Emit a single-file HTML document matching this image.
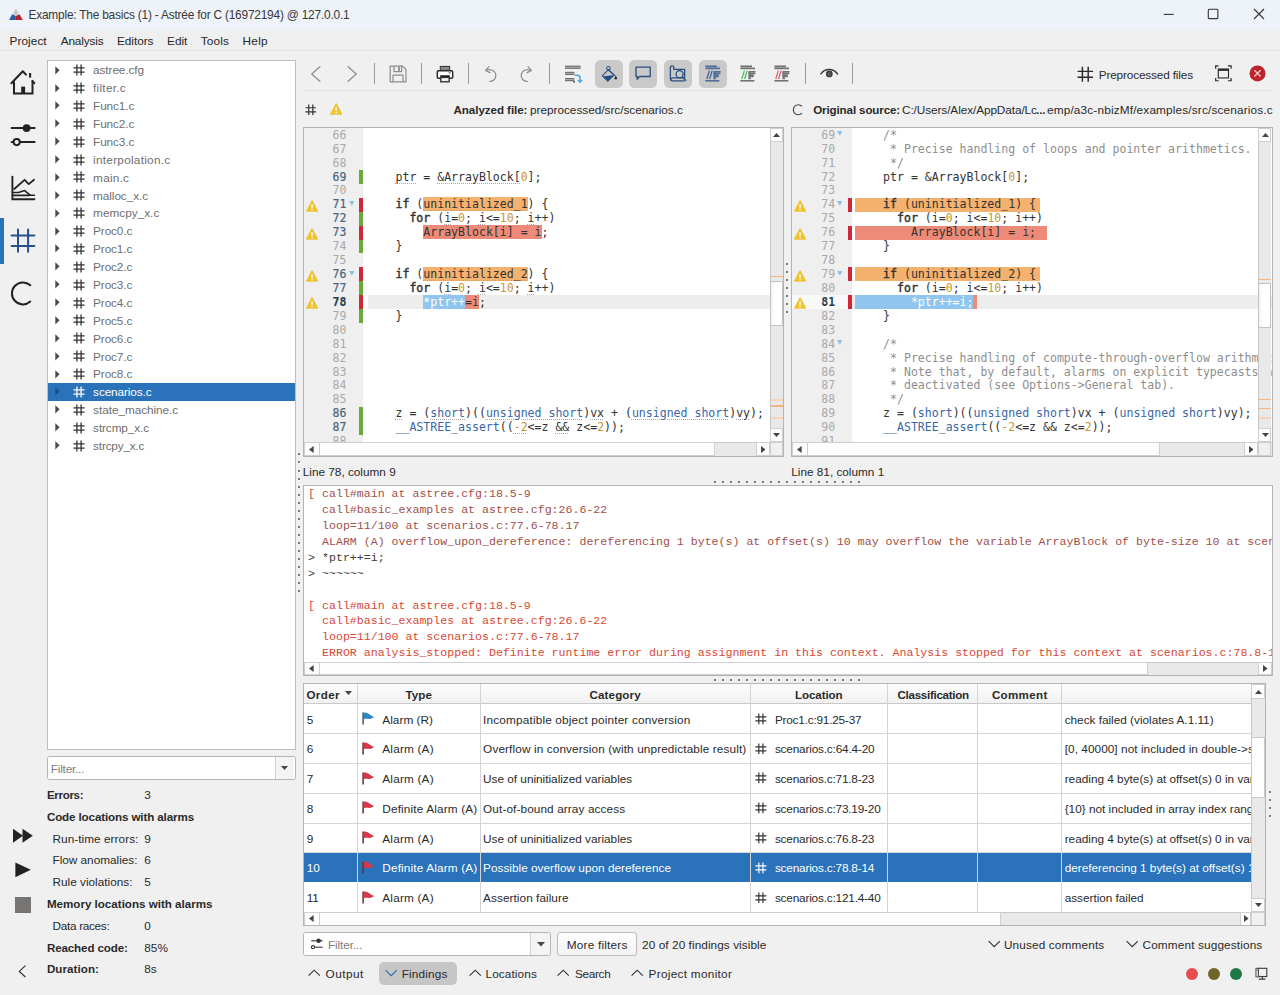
<!DOCTYPE html>
<html lang="en"><head><meta charset="utf-8"><title>Astrée for C</title>
<style>
*{box-sizing:border-box;margin:0;padding:0}
html,body{width:1280px;height:995px;overflow:hidden;background:#f0f0f0}
body{position:relative;font-family:"Liberation Sans",sans-serif;font-size:11.8px;color:#262626}
body div,body span.a,body svg.a{position:absolute}
.u,.b,.t{position:absolute;white-space:pre;line-height:16px;height:16px}
.u{font-size:11.8px}
.b{font-size:11.6px;font-weight:700}
.t{font-size:11.9px}
.pane{background:#fff;border:1px solid #bdbdbd}
.code{font-family:"DejaVu Sans Mono",monospace;font-size:11.555px;white-space:pre;position:absolute;line-height:13.93px;height:13.93px;color:#333}
.out{font-family:"Liberation Mono",monospace;font-size:11.607px;white-space:pre;position:absolute;line-height:15.91px;height:15.91px}

.k{color:#333;-webkit-text-stroke:0.45px #333}
.n{color:#c8962e}
.ty{color:#3a67a8}
.c{color:#8e8e8e}
.hO{background:#f4b26e}
.hR{background:#ee8a78}
.hB{background:#8fc5ee;color:#fff}
.d{text-decoration:underline dotted #a8a8a8 1px;text-underline-offset:2px}
.ln{font-family:"DejaVu Sans Mono",monospace;font-size:11.5px;position:absolute;line-height:13.93px;height:13.93px;text-align:right;color:#a9a9a9;width:30px}
.ln.dk{color:#4a657c;-webkit-text-stroke:0.2px #4a657c}
.ln.cur{color:#2a3a48;font-weight:700}
.sb{background:#e9e9e9}
.sbtn{background:#fdfdfd;border:1px solid #cfcfcf}
.w{color:#fff}
</style></head>
<body>
<div style="left:0px;top:0px;width:1280px;height:29.5px;background:#eef3f9"></div>
<div style="left:0px;top:29.5px;width:1280px;height:21px;background:#efefef"></div>
<div style="left:0px;top:50px;width:1280px;height:1px;background:#e2e2e2"></div>
<svg class="a" style="left:8px;top:7px" width="16" height="15" viewBox="0 0 16 15"><polygon points="7.9,1.2 10.9,6.7 7.8,8.4 4.9,6.7" fill="#c6c8cc"/><polygon points="1.1,12.9 4.2,7.2 7.8,9 7.8,12.9" fill="#2a5a9e"/><polygon points="7.8,12.9 7.8,9 11.5,7.2 14.8,12.9" fill="#b3222f"/></svg>
<span class="t" style="left:28.50px;top:7.20px;color:#383838;letter-spacing:-0.210px;">Example: The basics (1) - Astrée for C (16972194) @ 127.0.0.1</span>
<svg class="a" style="left:1155px;top:4px" width="120" height="20" viewBox="0 0 120 20" fill="none" stroke="#333" stroke-width="1.1"><path d="M8.7 10.4H18.7"/><rect x="53.3" y="5.2" width="9.6" height="9.4" rx="1"/><path d="M99 5L109 15M109 5L99 15"/></svg>
<span class="u" style="left:9.50px;top:32.70px;letter-spacing:0.069px;">Project</span>
<span class="u" style="left:60.70px;top:32.70px;letter-spacing:-0.155px;">Analysis</span>
<span class="u" style="left:117.00px;top:32.70px;letter-spacing:-0.046px;">Editors</span>
<span class="u" style="left:167.00px;top:32.70px;letter-spacing:0.018px;">Edit</span>
<span class="u" style="left:200.70px;top:32.70px;letter-spacing:0.171px;">Tools</span>
<span class="u" style="left:242.50px;top:32.70px;letter-spacing:0.284px;">Help</span>
<div style="left:0px;top:217.8px;width:3.5px;height:46.5px;background:#2a72b9"></div>
<svg class="a" style="left:9px;top:69px" width="28" height="28" viewBox="0 0 28 28" fill="none" stroke="#222" stroke-width="2" stroke-linecap="round" stroke-linejoin="round"><path d="M2.4 14.3L13.8 2.2L17 5.6"/><path d="M21.1 4V8.6" stroke-linecap="butt" stroke-width="2.1"/><path d="M23.4 11.8L25.3 14.2"/><path d="M5 12.4V24.6H23.5V12" stroke-linecap="butt" stroke-linejoin="miter"/><rect x="12.2" y="17.6" width="3.9" height="6.6" fill="#222" stroke="none"/></svg>
<svg class="a" style="left:9px;top:122px" width="28" height="28" viewBox="0 0 28 28" fill="none" stroke="#222" stroke-width="2" stroke-linecap="round" stroke-linejoin="round"><path d="M2.6 6.1H25.6"/><circle cx="17.6" cy="6.1" r="3.9" fill="#222" stroke="none"/><path d="M2.6 20.1H3.8M11.7 20.1H25.6"/><circle cx="7.7" cy="20.1" r="3.1" /></svg>
<svg class="a" style="left:9px;top:175px" width="28" height="28" viewBox="0 0 28 28" fill="none" stroke="#222" stroke-width="2" stroke-linecap="round" stroke-linejoin="round"><path d="M3.4 1.6V24.3H25.4" stroke-width="1.9" stroke-linejoin="miter"/><path d="M5.2 14L15.6 4.8L19.8 9.1L25 4.8" stroke-width="1.8"/><path d="M4.6 17.5H9.5L15.6 15.6L21.2 20.2H25.4M4.6 20.4H20" stroke-width="1.6"/></svg>
<svg class="a" style="left:9px;top:227px" width="28" height="28" viewBox="0 0 28 28" fill="none" stroke="#24508c" stroke-width="2" stroke-linecap="round"><path d="M9 2.6V24.8M19.1 2.6V24.8M2.6 8.5H25.4M2.6 19H25.4"/></svg>
<svg class="a" style="left:9px;top:280px" width="28" height="28" viewBox="0 0 28 28" fill="none" stroke="#222" stroke-width="2" stroke-linecap="round" stroke-linejoin="round"><path d="M21.3 5.2A11 11 0 1 0 21.3 21.6" stroke-width="2"/></svg>
<svg class="a" style="left:10px;top:826px" width="26" height="20" viewBox="0 0 26 20"><polygon points="3,2.8 13,9.8 3,16.8" fill="#222"/><polygon points="12.5,2.8 22.8,9.8 12.5,16.8" fill="#222"/></svg>
<svg class="a" style="left:10px;top:860px" width="26" height="20" viewBox="0 0 26 20"><polygon points="5.4,2.5 20.8,9.8 5.4,17.2" fill="#222"/></svg>
<div style="left:14.9px;top:897px;width:16.4px;height:15.5px;background:#777474"></div>
<svg class="a" style="left:15px;top:962px" width="16" height="18" viewBox="0 0 16 18" fill="none" stroke="#333" stroke-width="1.2"><path d="M10.4 3.6L4.3 9.4L10.4 15"/></svg>
<div class="pane" style="left:47px;top:60px;width:248.5px;height:690px"></div>
<svg class="a" style="left:55px;top:65.64px" width="6" height="9" viewBox="0 0 6 9"><polygon points="0.3,0.3 4.6,4.3 0.3,8.4" fill="#4a4a4a"/></svg>
<svg class="a" style="left:72.5px;top:64.14px" width="12" height="12" viewBox="0 0 12 12" fill="none" stroke="#333" stroke-width="1.3"><path d="M3.9 0.6V11.4M8.1 0.6V11.4M0.4 3.9H11.6M0.4 8.1H11.6"/></svg>
<span class="u" style="left:93.10px;top:62.45px;color:#6e6e6e;letter-spacing:-0.091px;">astree.cfg</span>
<svg class="a" style="left:55px;top:83.52px" width="6" height="9" viewBox="0 0 6 9"><polygon points="0.3,0.3 4.6,4.3 0.3,8.4" fill="#4a4a4a"/></svg>
<svg class="a" style="left:72.5px;top:82.02px" width="12" height="12" viewBox="0 0 12 12" fill="none" stroke="#333" stroke-width="1.3"><path d="M3.9 0.6V11.4M8.1 0.6V11.4M0.4 3.9H11.6M0.4 8.1H11.6"/></svg>
<span class="u" style="left:93.10px;top:80.33px;color:#6e6e6e;letter-spacing:0.248px;">filter.c</span>
<svg class="a" style="left:55px;top:101.40px" width="6" height="9" viewBox="0 0 6 9"><polygon points="0.3,0.3 4.6,4.3 0.3,8.4" fill="#4a4a4a"/></svg>
<svg class="a" style="left:72.5px;top:99.9px" width="12" height="12" viewBox="0 0 12 12" fill="none" stroke="#333" stroke-width="1.3"><path d="M3.9 0.6V11.4M8.1 0.6V11.4M0.4 3.9H11.6M0.4 8.1H11.6"/></svg>
<span class="u" style="left:93.10px;top:98.21px;color:#6e6e6e;letter-spacing:-0.124px;">Func1.c</span>
<svg class="a" style="left:55px;top:119.28px" width="6" height="9" viewBox="0 0 6 9"><polygon points="0.3,0.3 4.6,4.3 0.3,8.4" fill="#4a4a4a"/></svg>
<svg class="a" style="left:72.5px;top:117.78px" width="12" height="12" viewBox="0 0 12 12" fill="none" stroke="#333" stroke-width="1.3"><path d="M3.9 0.6V11.4M8.1 0.6V11.4M0.4 3.9H11.6M0.4 8.1H11.6"/></svg>
<span class="u" style="left:93.10px;top:116.09px;color:#6e6e6e;letter-spacing:-0.124px;">Func2.c</span>
<svg class="a" style="left:55px;top:137.16px" width="6" height="9" viewBox="0 0 6 9"><polygon points="0.3,0.3 4.6,4.3 0.3,8.4" fill="#4a4a4a"/></svg>
<svg class="a" style="left:72.5px;top:135.66px" width="12" height="12" viewBox="0 0 12 12" fill="none" stroke="#333" stroke-width="1.3"><path d="M3.9 0.6V11.4M8.1 0.6V11.4M0.4 3.9H11.6M0.4 8.1H11.6"/></svg>
<span class="u" style="left:93.10px;top:133.97px;color:#6e6e6e;letter-spacing:-0.124px;">Func3.c</span>
<svg class="a" style="left:55px;top:155.04px" width="6" height="9" viewBox="0 0 6 9"><polygon points="0.3,0.3 4.6,4.3 0.3,8.4" fill="#4a4a4a"/></svg>
<svg class="a" style="left:72.5px;top:153.54px" width="12" height="12" viewBox="0 0 12 12" fill="none" stroke="#333" stroke-width="1.3"><path d="M3.9 0.6V11.4M8.1 0.6V11.4M0.4 3.9H11.6M0.4 8.1H11.6"/></svg>
<span class="u" style="left:93.10px;top:151.85px;color:#6e6e6e;letter-spacing:0.256px;">interpolation.c</span>
<svg class="a" style="left:55px;top:172.92px" width="6" height="9" viewBox="0 0 6 9"><polygon points="0.3,0.3 4.6,4.3 0.3,8.4" fill="#4a4a4a"/></svg>
<svg class="a" style="left:72.5px;top:171.42px" width="12" height="12" viewBox="0 0 12 12" fill="none" stroke="#333" stroke-width="1.3"><path d="M3.9 0.6V11.4M8.1 0.6V11.4M0.4 3.9H11.6M0.4 8.1H11.6"/></svg>
<span class="u" style="left:93.10px;top:169.73px;color:#6e6e6e;letter-spacing:0.225px;">main.c</span>
<svg class="a" style="left:55px;top:190.80px" width="6" height="9" viewBox="0 0 6 9"><polygon points="0.3,0.3 4.6,4.3 0.3,8.4" fill="#4a4a4a"/></svg>
<svg class="a" style="left:72.5px;top:189.3px" width="12" height="12" viewBox="0 0 12 12" fill="none" stroke="#333" stroke-width="1.3"><path d="M3.9 0.6V11.4M8.1 0.6V11.4M0.4 3.9H11.6M0.4 8.1H11.6"/></svg>
<span class="u" style="left:93.10px;top:187.61px;color:#6e6e6e;letter-spacing:-0.083px;">malloc_x.c</span>
<svg class="a" style="left:55px;top:208.68px" width="6" height="9" viewBox="0 0 6 9"><polygon points="0.3,0.3 4.6,4.3 0.3,8.4" fill="#4a4a4a"/></svg>
<svg class="a" style="left:72.5px;top:207.18px" width="12" height="12" viewBox="0 0 12 12" fill="none" stroke="#333" stroke-width="1.3"><path d="M3.9 0.6V11.4M8.1 0.6V11.4M0.4 3.9H11.6M0.4 8.1H11.6"/></svg>
<span class="u" style="left:93.10px;top:205.49px;color:#6e6e6e;letter-spacing:-0.002px;">memcpy_x.c</span>
<svg class="a" style="left:55px;top:226.56px" width="6" height="9" viewBox="0 0 6 9"><polygon points="0.3,0.3 4.6,4.3 0.3,8.4" fill="#4a4a4a"/></svg>
<svg class="a" style="left:72.5px;top:225.06px" width="12" height="12" viewBox="0 0 12 12" fill="none" stroke="#333" stroke-width="1.3"><path d="M3.9 0.6V11.4M8.1 0.6V11.4M0.4 3.9H11.6M0.4 8.1H11.6"/></svg>
<span class="u" style="left:93.10px;top:223.37px;color:#6e6e6e;letter-spacing:-0.129px;">Proc0.c</span>
<svg class="a" style="left:55px;top:244.44px" width="6" height="9" viewBox="0 0 6 9"><polygon points="0.3,0.3 4.6,4.3 0.3,8.4" fill="#4a4a4a"/></svg>
<svg class="a" style="left:72.5px;top:242.94px" width="12" height="12" viewBox="0 0 12 12" fill="none" stroke="#333" stroke-width="1.3"><path d="M3.9 0.6V11.4M8.1 0.6V11.4M0.4 3.9H11.6M0.4 8.1H11.6"/></svg>
<span class="u" style="left:93.10px;top:241.25px;color:#6e6e6e;letter-spacing:-0.129px;">Proc1.c</span>
<svg class="a" style="left:55px;top:262.32px" width="6" height="9" viewBox="0 0 6 9"><polygon points="0.3,0.3 4.6,4.3 0.3,8.4" fill="#4a4a4a"/></svg>
<svg class="a" style="left:72.5px;top:260.82px" width="12" height="12" viewBox="0 0 12 12" fill="none" stroke="#333" stroke-width="1.3"><path d="M3.9 0.6V11.4M8.1 0.6V11.4M0.4 3.9H11.6M0.4 8.1H11.6"/></svg>
<span class="u" style="left:93.10px;top:259.13px;color:#6e6e6e;letter-spacing:-0.129px;">Proc2.c</span>
<svg class="a" style="left:55px;top:280.20px" width="6" height="9" viewBox="0 0 6 9"><polygon points="0.3,0.3 4.6,4.3 0.3,8.4" fill="#4a4a4a"/></svg>
<svg class="a" style="left:72.5px;top:278.7px" width="12" height="12" viewBox="0 0 12 12" fill="none" stroke="#333" stroke-width="1.3"><path d="M3.9 0.6V11.4M8.1 0.6V11.4M0.4 3.9H11.6M0.4 8.1H11.6"/></svg>
<span class="u" style="left:93.10px;top:277.01px;color:#6e6e6e;letter-spacing:-0.129px;">Proc3.c</span>
<svg class="a" style="left:55px;top:298.08px" width="6" height="9" viewBox="0 0 6 9"><polygon points="0.3,0.3 4.6,4.3 0.3,8.4" fill="#4a4a4a"/></svg>
<svg class="a" style="left:72.5px;top:296.58px" width="12" height="12" viewBox="0 0 12 12" fill="none" stroke="#333" stroke-width="1.3"><path d="M3.9 0.6V11.4M8.1 0.6V11.4M0.4 3.9H11.6M0.4 8.1H11.6"/></svg>
<span class="u" style="left:93.10px;top:294.89px;color:#6e6e6e;letter-spacing:-0.129px;">Proc4.c</span>
<svg class="a" style="left:55px;top:315.96px" width="6" height="9" viewBox="0 0 6 9"><polygon points="0.3,0.3 4.6,4.3 0.3,8.4" fill="#4a4a4a"/></svg>
<svg class="a" style="left:72.5px;top:314.46px" width="12" height="12" viewBox="0 0 12 12" fill="none" stroke="#333" stroke-width="1.3"><path d="M3.9 0.6V11.4M8.1 0.6V11.4M0.4 3.9H11.6M0.4 8.1H11.6"/></svg>
<span class="u" style="left:93.10px;top:312.77px;color:#6e6e6e;letter-spacing:-0.129px;">Proc5.c</span>
<svg class="a" style="left:55px;top:333.84px" width="6" height="9" viewBox="0 0 6 9"><polygon points="0.3,0.3 4.6,4.3 0.3,8.4" fill="#4a4a4a"/></svg>
<svg class="a" style="left:72.5px;top:332.34px" width="12" height="12" viewBox="0 0 12 12" fill="none" stroke="#333" stroke-width="1.3"><path d="M3.9 0.6V11.4M8.1 0.6V11.4M0.4 3.9H11.6M0.4 8.1H11.6"/></svg>
<span class="u" style="left:93.10px;top:330.65px;color:#6e6e6e;letter-spacing:-0.129px;">Proc6.c</span>
<svg class="a" style="left:55px;top:351.72px" width="6" height="9" viewBox="0 0 6 9"><polygon points="0.3,0.3 4.6,4.3 0.3,8.4" fill="#4a4a4a"/></svg>
<svg class="a" style="left:72.5px;top:350.22px" width="12" height="12" viewBox="0 0 12 12" fill="none" stroke="#333" stroke-width="1.3"><path d="M3.9 0.6V11.4M8.1 0.6V11.4M0.4 3.9H11.6M0.4 8.1H11.6"/></svg>
<span class="u" style="left:93.10px;top:348.53px;color:#6e6e6e;letter-spacing:-0.129px;">Proc7.c</span>
<svg class="a" style="left:55px;top:369.60px" width="6" height="9" viewBox="0 0 6 9"><polygon points="0.3,0.3 4.6,4.3 0.3,8.4" fill="#4a4a4a"/></svg>
<svg class="a" style="left:72.5px;top:368.1px" width="12" height="12" viewBox="0 0 12 12" fill="none" stroke="#333" stroke-width="1.3"><path d="M3.9 0.6V11.4M8.1 0.6V11.4M0.4 3.9H11.6M0.4 8.1H11.6"/></svg>
<span class="u" style="left:93.10px;top:366.41px;color:#6e6e6e;letter-spacing:-0.129px;">Proc8.c</span>
<div style="left:48px;top:382.94px;width:246.5px;height:17.98px;background:#2a72b9"></div>
<svg class="a" style="left:55px;top:387.48px" width="6" height="9" viewBox="0 0 6 9"><polygon points="0.3,0.3 4.6,4.3 0.3,8.4" fill="#1c4f85"/></svg>
<svg class="a" style="left:72.5px;top:385.98px" width="12" height="12" viewBox="0 0 12 12" fill="none" stroke="#fff" stroke-width="1.3"><path d="M3.9 0.6V11.4M8.1 0.6V11.4M0.4 3.9H11.6M0.4 8.1H11.6"/></svg>
<span class="u" style="left:93.10px;top:384.29px;color:#fff;letter-spacing:-0.116px;">scenarios.c</span>
<svg class="a" style="left:55px;top:405.36px" width="6" height="9" viewBox="0 0 6 9"><polygon points="0.3,0.3 4.6,4.3 0.3,8.4" fill="#4a4a4a"/></svg>
<svg class="a" style="left:72.5px;top:403.86px" width="12" height="12" viewBox="0 0 12 12" fill="none" stroke="#333" stroke-width="1.3"><path d="M3.9 0.6V11.4M8.1 0.6V11.4M0.4 3.9H11.6M0.4 8.1H11.6"/></svg>
<span class="u" style="left:93.10px;top:402.17px;color:#6e6e6e;letter-spacing:-0.054px;">state_machine.c</span>
<svg class="a" style="left:55px;top:423.24px" width="6" height="9" viewBox="0 0 6 9"><polygon points="0.3,0.3 4.6,4.3 0.3,8.4" fill="#4a4a4a"/></svg>
<svg class="a" style="left:72.5px;top:421.74px" width="12" height="12" viewBox="0 0 12 12" fill="none" stroke="#333" stroke-width="1.3"><path d="M3.9 0.6V11.4M8.1 0.6V11.4M0.4 3.9H11.6M0.4 8.1H11.6"/></svg>
<span class="u" style="left:93.10px;top:420.05px;color:#6e6e6e;letter-spacing:-0.113px;">strcmp_x.c</span>
<svg class="a" style="left:55px;top:441.12px" width="6" height="9" viewBox="0 0 6 9"><polygon points="0.3,0.3 4.6,4.3 0.3,8.4" fill="#4a4a4a"/></svg>
<svg class="a" style="left:72.5px;top:439.62px" width="12" height="12" viewBox="0 0 12 12" fill="none" stroke="#333" stroke-width="1.3"><path d="M3.9 0.6V11.4M8.1 0.6V11.4M0.4 3.9H11.6M0.4 8.1H11.6"/></svg>
<span class="u" style="left:93.10px;top:437.93px;color:#6e6e6e;letter-spacing:-0.191px;">strcpy_x.c</span>
<div style="left:47px;top:756px;width:248.5px;height:23.6px;background:#fff;border:1px solid #b5b5b5;border-radius:2.5px"></div>
<div style="left:275.3px;top:757px;width:1px;height:21.6px;background:#cfcfcf"></div>
<div style="left:276.3px;top:757px;width:18.2px;height:21.6px;background:#f4f4f4;border-radius:0 2px 2px 0"></div>
<svg class="a" style="left:281px;top:765.8px" width="7" height="4.4" viewBox="0 0 8 5"><polygon points="0,0 8,0 4,4.6" fill="#444"/></svg>
<span class="u" style="left:50.80px;top:761.20px;color:#7c7c7c;letter-spacing:-0.223px;">Filter...</span>
<span class="b" style="left:46.90px;top:786.98px;color:#2a2a2a;letter-spacing:-0.325px;">Errors:</span>
<span class="u" style="left:144.30px;top:786.98px;color:#2a2a2a;letter-spacing:-0.006px;">3</span>
<span class="b" style="left:46.90px;top:808.78px;color:#2a2a2a;letter-spacing:-0.116px;">Code locations with alarms</span>
<span class="u" style="left:52.50px;top:830.58px;color:#2a2a2a;letter-spacing:0.043px;">Run-time errors:</span>
<span class="u" style="left:144.30px;top:830.58px;color:#2a2a2a;letter-spacing:-0.006px;">9</span>
<span class="u" style="left:52.50px;top:852.38px;color:#2a2a2a;letter-spacing:-0.022px;">Flow anomalies:</span>
<span class="u" style="left:144.30px;top:852.38px;color:#2a2a2a;letter-spacing:-0.006px;">6</span>
<span class="u" style="left:52.50px;top:874.18px;color:#2a2a2a;letter-spacing:-0.006px;">Rule violations:</span>
<span class="u" style="left:144.30px;top:874.18px;color:#2a2a2a;letter-spacing:-0.006px;">5</span>
<span class="b" style="left:46.90px;top:895.98px;color:#2a2a2a;">Memory locations with alarms</span>
<span class="u" style="left:52.50px;top:917.78px;color:#2a2a2a;letter-spacing:-0.312px;">Data races:</span>
<span class="u" style="left:144.30px;top:917.78px;color:#2a2a2a;letter-spacing:-0.006px;">0</span>
<span class="b" style="left:46.90px;top:939.58px;color:#2a2a2a;letter-spacing:-0.122px;">Reached code:</span>
<span class="u" style="left:144.30px;top:939.58px;color:#2a2a2a;letter-spacing:-0.007px;">85%</span>
<span class="b" style="left:46.90px;top:961.38px;color:#2a2a2a;letter-spacing:0.063px;">Duration:</span>
<span class="u" style="left:144.30px;top:961.38px;color:#2a2a2a;letter-spacing:-0.006px;">8s</span>
<div style="left:303px;top:90px;width:969px;height:1px;background:#e3e3e3"></div>
<div style="left:374.2px;top:63px;width:1.2px;height:20.5px;background:#9a9a9a"></div>
<div style="left:420.9px;top:63px;width:1.2px;height:20.5px;background:#9a9a9a"></div>
<div style="left:467.9px;top:63px;width:1.2px;height:20.5px;background:#9a9a9a"></div>
<div style="left:549.1999999999999px;top:63px;width:1.2px;height:20.5px;background:#9a9a9a"></div>
<div style="left:805.1999999999999px;top:63px;width:1.2px;height:20.5px;background:#9a9a9a"></div>
<div style="left:851.9px;top:63px;width:1.2px;height:20.5px;background:#9a9a9a"></div>
<svg class="a" style="left:304.3px;top:61.5px" width="24" height="24" viewBox="0 0 24 24" fill="none" stroke="#8c8c8c" stroke-width="1.2" stroke-linecap="round" stroke-linejoin="round"><path d="M15.9 4.7L7.7 12L15.9 19.3"/></svg>
<svg class="a" style="left:339.5px;top:61.5px" width="24" height="24" viewBox="0 0 24 24" fill="none" stroke="#8c8c8c" stroke-width="1.2" stroke-linecap="round" stroke-linejoin="round"><path d="M8.1 4.7L16.3 12L8.1 19.3"/></svg>
<svg class="a" style="left:386.0px;top:61.5px" width="24" height="24" viewBox="0 0 24 24" fill="none" stroke="#8c8c8c" stroke-width="1.2" stroke-linecap="round" stroke-linejoin="round"><path d="M4.2 4.2H16.6L20 7.6V19.8H4.2Z"/><path d="M8 4.4V9.6H15.6V4.4"/><path d="M13 5.6V8.2" stroke-width="1.8"/><path d="M7 19.6V13.2H17V19.6"/></svg>
<svg class="a" style="left:433.2px;top:61.5px" width="24" height="24" viewBox="0 0 24 24" ><rect x="7.3" y="4.4" width="9.4" height="4" fill="#888" stroke="#333" stroke-width="1"/><rect x="4.3" y="8.8" width="15.4" height="7.4" rx="1.2" fill="#fff" stroke="#2a2a2a" stroke-width="1.5"/><rect x="7.2" y="13.2" width="9.6" height="2.2" fill="#2a2a2a"/><rect x="7.8" y="15.4" width="8.4" height="4.4" fill="#eee" stroke="#2a2a2a" stroke-width="1.3"/><rect x="15.6" y="10.2" width="2" height="1.4" fill="#777"/></svg>
<svg class="a" style="left:479.0px;top:61.5px" width="24" height="24" viewBox="0 0 24 24" fill="none" stroke="#8c8c8c" stroke-width="1.2" stroke-linecap="round" stroke-linejoin="round"><path d="M7 8.2C13.5 6.2 18 10.5 16.5 15.2C15.6 17.8 13.2 19.4 10.5 19.5"/><path d="M10 4.6L6.6 8.4L11 10.6"/></svg>
<svg class="a" style="left:514.0px;top:61.5px" width="24" height="24" viewBox="0 0 24 24" fill="none" stroke="#8c8c8c" stroke-width="1.2" stroke-linecap="round" stroke-linejoin="round"><path d="M17 8.2C10.5 6.2 6 10.5 7.5 15.2C8.4 17.8 10.8 19.4 13.5 19.5"/><path d="M14 4.6L17.4 8.4L13 10.6"/></svg>
<svg class="a" style="left:561.4px;top:61.5px" width="24" height="24" viewBox="0 0 24 24" ><rect x="4" y="3.6" width="15.6" height="3.3" fill="#6e6e6e"/><rect x="4" y="9.8" width="9.4" height="3.2" fill="#6e6e6e"/><rect x="4" y="16" width="9.4" height="3.2" fill="#6e6e6e"/><rect x="12.1" y="19" width="1.8" height="1.5" fill="#555"/><path d="M4 5.25H19.6M4 11.4H13.4M4 17.6H13.4" stroke="#f0f0f0" stroke-width="0.5"/><path d="M13.6 13.2H16.4C18.6 13.2 19.1 14.6 19.1 16.2V19.6" fill="none" stroke="#4ea2e2" stroke-width="1.5"/><path d="M16.9 18L19.1 20.4L21.2 18" fill="none" stroke="#4ea2e2" stroke-width="1.3"/></svg>
<div style="left:594.5px;top:59.5px;width:28px;height:28px;background:#c9c9c9;border-radius:5.5px"></div>
<div style="left:629.2px;top:59.5px;width:28px;height:28px;background:#c9c9c9;border-radius:5.5px"></div>
<div style="left:664px;top:59.5px;width:28px;height:28px;background:#c9c9c9;border-radius:5.5px"></div>
<div style="left:699px;top:59.5px;width:28px;height:28px;background:#c9c9c9;border-radius:5.5px"></div>
<svg class="a" style="left:596.5px;top:61.5px" width="24" height="24" viewBox="0 0 24 24" ><g transform="translate(1.1 0.6) scale(0.92)"><circle cx="11.2" cy="6.2" r="1.9" fill="none" stroke="#2b4f7c" stroke-width="1.1"/><path d="M11 7.8L4.6 14.4L10.6 20.2L17.2 13.6Z" fill="none" stroke="#2b4f7c" stroke-width="1.2" stroke-linejoin="round"/><path d="M5 14.6L10.6 20L16.6 14.2C13 13.4 9 15.4 5 14.6Z" fill="#1f4d85"/><path d="M11.4 8L17.4 13.4L19 14.2" fill="none" stroke="#2b4f7c" stroke-width="1.1"/><path d="M19.2 14.4C20.2 15.8 20.6 16.4 20.6 17.1A1.4 1.4 0 0 1 17.8 17.1C17.8 16.4 18.2 15.8 19.2 14.4Z" fill="#23364f"/></g></svg>
<svg class="a" style="left:631.2px;top:61.5px" width="24" height="24" viewBox="0 0 24 24" ><path d="M5 5.1H19.2V14.5H8.4L6.2 17.3V14.5H5Z" fill="none" stroke="#2b4f7c" stroke-width="1.3" stroke-linejoin="round"/></svg>
<svg class="a" style="left:666.0px;top:61.5px" width="24" height="24" viewBox="0 0 24 24" ><g transform="translate(0 -0.8)"><path d="M6 4.6C4.8 4.6 4.4 5.4 4.4 6.4V17.4C4.4 18.8 5.2 19.6 6.4 19.6H18.4" fill="none" stroke="#2b4f7c" stroke-width="1.3"/><path d="M6.2 4.6C7.4 4.6 7.8 5.4 7.8 6.4V8.2H18.6V16.6H7.6C6 16.6 5 17.4 4.6 18.2" fill="none" stroke="#2b4f7c" stroke-width="1.3"/><circle cx="13.6" cy="13" r="3.5" fill="#c9c9c9" stroke="#2b4f7c" stroke-width="1.3"/><path d="M16.2 15.8L20 19.6" stroke="#2b4f7c" stroke-width="1.5"/></g></svg>
<svg class="a" style="left:701.0px;top:61.5px" width="24" height="24" viewBox="0 0 24 24" fill="none"><path d="M4.4 4.4H16" stroke="#4f6e98" stroke-width="1.9"/><path d="M4.4 6.4H19" stroke="#4f6e98" stroke-width="1.7"/><path d="M4.4 18.8H18.4" stroke="#4f6e98" stroke-width="1.6"/><path d="M8.4 8.6L5.8 17M11.2 8.6L8.6 17" stroke="#3f6598" stroke-width="1.3"/><path d="M12.6 9.8H19.6M12.6 11.4H19.4M12.6 13.2H17.8M12.6 14.6H17.8M12.6 16.4H15" stroke="#4f6e98" stroke-width="1.5"/><path d="M13.4 9.6V17" stroke="#4f6e98" stroke-width="1.8"/></svg>
<svg class="a" style="left:735.5px;top:61.5px" width="24" height="24" viewBox="0 0 24 24" fill="none"><path d="M4.4 4.4H16" stroke="#737373" stroke-width="1.9"/><path d="M4.4 6.4H19" stroke="#737373" stroke-width="1.7"/><path d="M4.4 18.8H18.4" stroke="#737373" stroke-width="1.6"/><path d="M8.4 8.6L5.8 17M11.2 8.6L8.6 17" stroke="#4fbf5f" stroke-width="1.3"/><path d="M12.6 9.8H19.6M12.6 11.4H19.4M12.6 13.2H17.8M12.6 14.6H17.8M12.6 16.4H15" stroke="#737373" stroke-width="1.5"/><path d="M13.4 9.6V17" stroke="#737373" stroke-width="1.8"/></svg>
<svg class="a" style="left:770.3px;top:61.5px" width="24" height="24" viewBox="0 0 24 24" fill="none"><path d="M4.4 4.4H16" stroke="#737373" stroke-width="1.9"/><path d="M4.4 6.4H19" stroke="#737373" stroke-width="1.7"/><path d="M4.4 18.8H18.4" stroke="#737373" stroke-width="1.6"/><path d="M8.4 8.6L5.8 17M11.2 8.6L8.6 17" stroke="#e0646c" stroke-width="1.3"/><path d="M12.6 9.8H19.6M12.6 11.4H19.4M12.6 13.2H17.8M12.6 14.6H17.8M12.6 16.4H15" stroke="#737373" stroke-width="1.5"/><path d="M13.4 9.6V17" stroke="#737373" stroke-width="1.8"/></svg>
<svg class="a" style="left:817.0px;top:61.5px" width="24" height="24" viewBox="0 0 24 24" ><path d="M3.8 12C7.6 5.9 16.6 5.9 20.6 12" fill="none" stroke="#3a3a3a" stroke-width="1.4" stroke-linecap="round"/><circle cx="12.3" cy="11.9" r="3.4" fill="#3f3f3f"/><circle cx="12.3" cy="11.9" r="1.6" fill="#777"/><path d="M12.3 10.4V12.1H13.8" fill="none" stroke="#333" stroke-width="0.8"/></svg>
<svg class="a" style="left:1077.4px;top:65.60000000000001px" width="16.6" height="16.6" viewBox="0 0 12 12" fill="none" stroke="#2a2a2a" stroke-width="1.05"><path d="M3.9 0.6V11.4M8.1 0.6V11.4M0.4 3.9H11.6M0.4 8.1H11.6"/></svg>
<span class="u" style="left:1098.70px;top:67.20px;color:#2a2a2a;letter-spacing:-0.158px;">Preprocessed files</span>
<svg class="a" style="left:1214px;top:64.2px" width="18.6" height="18.6" viewBox="0 0 20 20" fill="none" stroke="#2a2a2a" stroke-width="1.3"><path d="M1.8 5V2H5M15 2H18.4V5M18.4 15V18H15M5 18H1.8V15"/><rect x="4.6" y="5.4" width="11" height="9.6" stroke-width="1.2"/><path d="M4.6 6.4H15.6" stroke-width="2"/></svg>
<svg class="a" style="left:1249.4px;top:64.9px" width="17" height="17" viewBox="0 0 17 17"><circle cx="8.5" cy="8.4" r="8" fill="#bd242b"/><path d="M5.4 5.3L11.6 11.5M11.6 5.3L5.4 11.5" stroke="#f5c0c0" stroke-width="1.5" fill="none"/></svg>
<svg class="a" style="left:304.6px;top:103.8px" width="11.6" height="11.6" viewBox="0 0 12 12" fill="none" stroke="#333" stroke-width="1.25"><path d="M3.9 0.6V11.4M8.1 0.6V11.4M0.4 3.9H11.6M0.4 8.1H11.6"/></svg>
<svg class="a" style="left:329.5px;top:103.1px" width="12.4" height="12.4" viewBox="0 0 12 12"><path d="M6 0.5L11.6 11H0.4Z" fill="#f3c42a" stroke="#e9b81a" stroke-width="0.7" stroke-linejoin="round"/><path d="M6 4.2V7.8" stroke="#fff8dc" stroke-width="1.5"/><circle cx="6" cy="9.4" r="0.85" fill="#fff8dc"/></svg>
<span class="b" style="left:453.50px;top:101.60px;color:#2a2a2a;letter-spacing:-0.060px;">Analyzed file:</span>
<span class="u" style="left:530.00px;top:101.60px;color:#2a2a2a;letter-spacing:-0.019px;">preprocessed/src/scenarios.c</span>
<svg class="a" style="left:791px;top:103px" width="14" height="14" viewBox="0 0 14 14" fill="none" stroke="#444" stroke-width="1.1"><path d="M11 3.4A5 5 0 1 0 11 10.2"/></svg>
<span class="b" style="left:813.20px;top:101.60px;color:#2a2a2a;letter-spacing:-0.125px;">Original source:</span>
<span class="u" style="left:902.00px;top:101.60px;color:#2a2a2a;letter-spacing:-0.089px;">C:/Users/Alex/AppData/Lc</span>
<span class="b" style="left:1036.00px;top:101.60px;color:#2a2a2a;letter-spacing:-0.091px;">...</span>
<span class="u" style="left:1047.00px;top:101.60px;color:#2a2a2a;letter-spacing:0.160px;">emp/a3c-nbizMf/examples/src/scenarios.c</span>
<div style="left:303px;top:127px;width:481.2px;height:329.5px;background:#fff;border:1px solid #b4b4b4;overflow:hidden">
<div style="left:0;top:0;width:59px;height:314px;background:#efefef"></div>
<span class="ln" style="left:12.399999999999977px;top:0.75px">66</span>
<span class="ln" style="left:12.399999999999977px;top:14.68px">67</span>
<span class="ln" style="left:12.399999999999977px;top:28.61px">68</span>
<div style="left:55px;top:42px;width:4.2px;height:14px;background:#6aaa38"></div>
<span class="ln dk" style="left:12.399999999999977px;top:42.54px">69</span>
<span class="code" style="left:91.5px;top:42.54px"><span class="d">ptr</span> = <span class="d">&amp;ArrayBlock[</span><span class="n">0</span>];</span>
<span class="ln" style="left:12.399999999999977px;top:56.47px">70</span>
<div style="left:55px;top:70px;width:4.2px;height:14px;background:#d0283a"></div>
<span class="ln dk" style="left:12.399999999999977px;top:70.40px">71</span>
<svg class="a" style="left:44.5px;top:72.91499999999999px" width="5.6" height="4.8" viewBox="0 0 5.6 4.8"><polygon points="0,0 5.6,0 2.8,4.8" fill="#8fc0e6"/></svg>
<svg class="a" style="left:1.6999999999999886px;top:71.915px" width="12.2" height="12.2" viewBox="0 0 12 12"><path d="M6 0.5L11.6 11H0.4Z" fill="#f3c42a" stroke="#e9b81a" stroke-width="0.7" stroke-linejoin="round"/><path d="M6 4.2V7.8" stroke="#fff8dc" stroke-width="1.5"/><circle cx="6" cy="9.4" r="0.85" fill="#fff8dc"/></svg>
<span class="code" style="left:91.5px;top:70.40px"><span class="k">if</span> (<span class="hO d">uninitialized_1</span>) {</span>
<div style="left:55px;top:84px;width:4.2px;height:14px;background:#6aaa38"></div>
<span class="ln dk" style="left:12.399999999999977px;top:84.33px">72</span>
<span class="code" style="left:91.5px;top:84.33px">  <span class="k">for</span> (<span class="d">i</span>=<span class="n">0</span>; <span class="d">i</span>&lt;=<span class="n">10</span>; <span class="d">i</span>++)</span>
<div style="left:55px;top:98px;width:4.2px;height:14px;background:#d0283a"></div>
<span class="ln dk" style="left:12.399999999999977px;top:98.26px">73</span>
<svg class="a" style="left:1.6999999999999886px;top:99.77499999999999px" width="12.2" height="12.2" viewBox="0 0 12 12"><path d="M6 0.5L11.6 11H0.4Z" fill="#f3c42a" stroke="#e9b81a" stroke-width="0.7" stroke-linejoin="round"/><path d="M6 4.2V7.8" stroke="#fff8dc" stroke-width="1.5"/><circle cx="6" cy="9.4" r="0.85" fill="#fff8dc"/></svg>
<span class="code" style="left:91.5px;top:98.26px">    <span class="hR d">ArrayBlock[i] = i</span>;</span>
<div style="left:55px;top:112px;width:4.2px;height:13px;background:#6aaa38"></div>
<span class="ln" style="left:12.399999999999977px;top:112.19px">74</span>
<span class="code" style="left:91.5px;top:112.19px">}</span>
<span class="ln" style="left:12.399999999999977px;top:126.12px">75</span>
<div style="left:55px;top:139px;width:4.2px;height:14px;background:#d0283a"></div>
<span class="ln dk" style="left:12.399999999999977px;top:140.05px">76</span>
<svg class="a" style="left:44.5px;top:142.56499999999997px" width="5.6" height="4.8" viewBox="0 0 5.6 4.8"><polygon points="0,0 5.6,0 2.8,4.8" fill="#8fc0e6"/></svg>
<svg class="a" style="left:1.6999999999999886px;top:141.565px" width="12.2" height="12.2" viewBox="0 0 12 12"><path d="M6 0.5L11.6 11H0.4Z" fill="#f3c42a" stroke="#e9b81a" stroke-width="0.7" stroke-linejoin="round"/><path d="M6 4.2V7.8" stroke="#fff8dc" stroke-width="1.5"/><circle cx="6" cy="9.4" r="0.85" fill="#fff8dc"/></svg>
<span class="code" style="left:91.5px;top:140.05px"><span class="k">if</span> (<span class="hO d">uninitialized_2</span>) {</span>
<div style="left:55px;top:153px;width:4.2px;height:14px;background:#6aaa38"></div>
<span class="ln dk" style="left:12.399999999999977px;top:153.98px">77</span>
<span class="code" style="left:91.5px;top:153.98px">  <span class="k">for</span> (<span class="d">i</span>=<span class="n">0</span>; <span class="d">i</span>&lt;=<span class="n">10</span>; <span class="d">i</span>++)</span>
<div style="left:64px;top:166.96px;width:465.0px;height:14.23px;background:#ededed"></div>
<div style="left:55px;top:167px;width:4.2px;height:14px;background:#d0283a"></div>
<span class="ln dk cur" style="left:12.399999999999977px;top:167.91px">78</span>
<svg class="a" style="left:1.6999999999999886px;top:169.425px" width="12.2" height="12.2" viewBox="0 0 12 12"><path d="M6 0.5L11.6 11H0.4Z" fill="#f3c42a" stroke="#e9b81a" stroke-width="0.7" stroke-linejoin="round"/><path d="M6 4.2V7.8" stroke="#fff8dc" stroke-width="1.5"/><circle cx="6" cy="9.4" r="0.85" fill="#fff8dc"/></svg>
<span class="code" style="left:91.5px;top:167.91px">    <span class="hB">*ptr++</span><span class="hR">=i</span>;</span>
<div style="left:55px;top:181px;width:4.2px;height:14px;background:#6aaa38"></div>
<span class="ln" style="left:12.399999999999977px;top:181.84px">79</span>
<span class="code" style="left:91.5px;top:181.84px">}</span>
<span class="ln" style="left:12.399999999999977px;top:195.77px">80</span>
<span class="ln" style="left:12.399999999999977px;top:209.70px">81</span>
<span class="ln" style="left:12.399999999999977px;top:223.63px">82</span>
<span class="ln" style="left:12.399999999999977px;top:237.56px">83</span>
<span class="ln" style="left:12.399999999999977px;top:251.49px">84</span>
<span class="ln" style="left:12.399999999999977px;top:265.42px">85</span>
<div style="left:55px;top:279px;width:4.2px;height:14px;background:#6aaa38"></div>
<span class="ln dk" style="left:12.399999999999977px;top:279.35px">86</span>
<span class="code" style="left:91.5px;top:279.35px"><span class="d">z</span> = (<span class="ty d">short</span>)((<span class="ty d">unsigned short</span>)<span class="d">vx</span> + (<span class="ty d">unsigned short</span>)<span class="d">vy</span>);</span>
<div style="left:55px;top:293px;width:4.2px;height:14px;background:#6aaa38"></div>
<span class="ln dk" style="left:12.399999999999977px;top:293.28px">87</span>
<span class="code" style="left:91.5px;top:293.28px"><span class="ty">__ASTREE_assert</span>((<span class="n d">-2</span>&lt;=z <span class="d">&amp;&amp;</span> z&lt;=<span class="n">2</span>));</span>
<span class="ln" style="left:12.399999999999977px;top:307.21px">88</span>
<div class="sb" style="left:465.59999999999997px;top:0;width:13.6px;height:314px;border-left:1px solid #c6c6c6"></div>
<div class="sbtn" style="left:465.59999999999997px;top:0;width:13.6px;height:14.2px"></div><svg class="a" style="left:469.2px;top:5.2px" width="7" height="4" viewBox="0 0 7 4"><polygon points="0,4 7,4 3.5,0" fill="#444"/></svg>
<div class="sbtn" style="left:465.59999999999997px;top:299.6px;width:13.6px;height:14.4px"></div><svg class="a" style="left:469.2px;top:305.2px" width="7" height="4" viewBox="0 0 7 4"><polygon points="0,0 7,0 3.5,4" fill="#444"/></svg>
<div style="left:466.59999999999997px;top:147.8px;width:12.6px;height:1.6px;background:#f4b47c"></div>
<div style="left:466.59999999999997px;top:277.2px;width:12.6px;height:1.6px;background:#f4b47c"></div>
<div style="left:466.59999999999997px;top:271px;width:12.6px;height:1.6px;background:#f8d4b4"></div>
<div style="left:466.59999999999997px;top:289px;width:12.6px;height:1.6px;background:#f8d4b4"></div>
<div style="left:465.59999999999997px;top:152.60000000000002px;width:13.6px;height:45.69999999999999px;background:linear-gradient(90deg,#f4f4f4,#fff 40%,#fff);border:1px solid #c2c2c2"></div>
<div class="sb" style="left:0;top:314px;width:479.2px;height:14px;border-top:1px solid #c6c6c6"></div>
<div class="sbtn" style="left:0;top:314px;width:15.6px;height:14px"></div><svg class="a" style="left:5px;top:318px" width="4.6" height="7" viewBox="0 0 4.6 7"><polygon points="4.6,0 4.6,7 0,3.5" fill="#444"/></svg>
<div style="left:15.6px;top:314px;width:395.69999999999993px;height:14px;background:#fdfdfd;border:1px solid #cfcfcf;border-left:none"></div>
<div class="sbtn" style="left:451.59999999999997px;top:314px;width:14.2px;height:14px"></div><svg class="a" style="left:456.59999999999997px;top:318px" width="4.6" height="7" viewBox="0 0 4.6 7"><polygon points="0,0 0,7 4.6,3.5" fill="#444"/></svg>
<div style="left:465.59999999999997px;top:314px;width:13.6px;height:14px;background:#f0f0f0;border:1px solid #cfcfcf"></div>
</div>
<div style="left:791px;top:127px;width:481.5px;height:329.5px;background:#fff;border:1px solid #b4b4b4;overflow:hidden">
<div style="left:0;top:0;width:60.200000000000045px;height:314px;background:#efefef"></div>
<span class="ln" style="left:13.199999999999932px;top:0.75px">69</span>
<svg class="a" style="left:44.799999999999955px;top:3.264999999999994px" width="5.6" height="4.8" viewBox="0 0 5.6 4.8"><polygon points="0,0 5.6,0 2.8,4.8" fill="#8fc0e6"/></svg>
<span class="code" style="left:91.10000000000002px;top:0.75px"><span class="c">/*</span></span>
<span class="ln" style="left:13.199999999999932px;top:14.68px">70</span>
<span class="code" style="left:91.10000000000002px;top:14.68px"><span class="c"> * Precise handling of loops and pointer arithmetics.</span></span>
<span class="ln" style="left:13.199999999999932px;top:28.61px">71</span>
<span class="code" style="left:91.10000000000002px;top:28.61px"><span class="c"> */</span></span>
<span class="ln" style="left:13.199999999999932px;top:42.54px">72</span>
<span class="code" style="left:91.10000000000002px;top:42.54px">ptr = &amp;ArrayBlock[<span class="n">0</span>];</span>
<span class="ln" style="left:13.199999999999932px;top:56.47px">73</span>
<div style="left:56px;top:70px;width:4.2px;height:14px;background:#d0283a"></div>
<div style="left:63px;top:70px;width:185.20000000000005px;height:14px;background:#f4b26e"></div>
<span class="ln" style="left:13.199999999999932px;top:70.40px">74</span>
<svg class="a" style="left:44.799999999999955px;top:72.91499999999999px" width="5.6" height="4.8" viewBox="0 0 5.6 4.8"><polygon points="0,0 5.6,0 2.8,4.8" fill="#8fc0e6"/></svg>
<svg class="a" style="left:1.7999999999999545px;top:71.915px" width="12.2" height="12.2" viewBox="0 0 12 12"><path d="M6 0.5L11.6 11H0.4Z" fill="#f3c42a" stroke="#e9b81a" stroke-width="0.7" stroke-linejoin="round"/><path d="M6 4.2V7.8" stroke="#fff8dc" stroke-width="1.5"/><circle cx="6" cy="9.4" r="0.85" fill="#fff8dc"/></svg>
<span class="code" style="left:91.10000000000002px;top:70.40px"><span class="k">if</span> (uninitialized_1) {</span>
<span class="ln" style="left:13.199999999999932px;top:84.33px">75</span>
<span class="code" style="left:91.10000000000002px;top:84.33px">  <span class="k">for</span> (i=<span class="n">0</span>; i&lt;=<span class="n">10</span>; i++)</span>
<div style="left:56px;top:98px;width:4.2px;height:14px;background:#d0283a"></div>
<div style="left:63px;top:98px;width:192px;height:14px;background:#ee8a78"></div>
<span class="ln" style="left:13.199999999999932px;top:98.26px">76</span>
<svg class="a" style="left:1.7999999999999545px;top:99.77499999999999px" width="12.2" height="12.2" viewBox="0 0 12 12"><path d="M6 0.5L11.6 11H0.4Z" fill="#f3c42a" stroke="#e9b81a" stroke-width="0.7" stroke-linejoin="round"/><path d="M6 4.2V7.8" stroke="#fff8dc" stroke-width="1.5"/><circle cx="6" cy="9.4" r="0.85" fill="#fff8dc"/></svg>
<span class="code" style="left:91.10000000000002px;top:98.26px">    ArrayBlock[i] = i;</span>
<span class="ln" style="left:13.199999999999932px;top:112.19px">77</span>
<span class="code" style="left:91.10000000000002px;top:112.19px">}</span>
<span class="ln" style="left:13.199999999999932px;top:126.12px">78</span>
<div style="left:56px;top:139px;width:4.2px;height:14px;background:#d0283a"></div>
<div style="left:63px;top:139px;width:185.20000000000005px;height:14px;background:#f4b26e"></div>
<span class="ln" style="left:13.199999999999932px;top:140.05px">79</span>
<svg class="a" style="left:44.799999999999955px;top:142.56499999999997px" width="5.6" height="4.8" viewBox="0 0 5.6 4.8"><polygon points="0,0 5.6,0 2.8,4.8" fill="#8fc0e6"/></svg>
<svg class="a" style="left:1.7999999999999545px;top:141.565px" width="12.2" height="12.2" viewBox="0 0 12 12"><path d="M6 0.5L11.6 11H0.4Z" fill="#f3c42a" stroke="#e9b81a" stroke-width="0.7" stroke-linejoin="round"/><path d="M6 4.2V7.8" stroke="#fff8dc" stroke-width="1.5"/><circle cx="6" cy="9.4" r="0.85" fill="#fff8dc"/></svg>
<span class="code" style="left:91.10000000000002px;top:140.05px"><span class="k">if</span> (uninitialized_2) {</span>
<span class="ln" style="left:13.199999999999932px;top:153.98px">80</span>
<span class="code" style="left:91.10000000000002px;top:153.98px">  <span class="k">for</span> (i=<span class="n">0</span>; i&lt;=<span class="n">10</span>; i++)</span>
<div style="left:60.200000000000045px;top:166.96px;width:465.3px;height:14.23px;background:#ededed"></div>
<div style="left:0;top:166.96px;width:60.200000000000045px;height:14.23px;background:#f9f9f9"></div>
<div style="left:56px;top:167px;width:4.2px;height:14px;background:#d0283a"></div>
<div style="left:63px;top:167px;width:118.29999999999995px;height:14px;background:#8fc5ee"></div>
<div style="left:181.29999999999995px;top:167px;width:3.7000000000000455px;height:14px;background:#ee8a78"></div>
<span class="ln cur" style="left:13.199999999999932px;top:167.91px">81</span>
<svg class="a" style="left:1.7999999999999545px;top:169.425px" width="12.2" height="12.2" viewBox="0 0 12 12"><path d="M6 0.5L11.6 11H0.4Z" fill="#f3c42a" stroke="#e9b81a" stroke-width="0.7" stroke-linejoin="round"/><path d="M6 4.2V7.8" stroke="#fff8dc" stroke-width="1.5"/><circle cx="6" cy="9.4" r="0.85" fill="#fff8dc"/></svg>
<span class="code" style="left:91.10000000000002px;top:167.91px"><span class="w">    *ptr++=i;</span></span>
<span class="ln" style="left:13.199999999999932px;top:181.84px">82</span>
<span class="code" style="left:91.10000000000002px;top:181.84px">}</span>
<span class="ln" style="left:13.199999999999932px;top:195.77px">83</span>
<span class="ln" style="left:13.199999999999932px;top:209.70px">84</span>
<svg class="a" style="left:44.799999999999955px;top:212.21499999999995px" width="5.6" height="4.8" viewBox="0 0 5.6 4.8"><polygon points="0,0 5.6,0 2.8,4.8" fill="#8fc0e6"/></svg>
<span class="code" style="left:91.10000000000002px;top:209.70px"><span class="c">/*</span></span>
<span class="ln" style="left:13.199999999999932px;top:223.63px">85</span>
<span class="code" style="left:91.10000000000002px;top:223.63px"><span class="c"> * Precise handling of compute-through-overflow arithmetics</span></span>
<span class="ln" style="left:13.199999999999932px;top:237.56px">86</span>
<span class="code" style="left:91.10000000000002px;top:237.56px"><span class="c"> * Note that, by default, alarms on explicit typecasts are</span></span>
<span class="ln" style="left:13.199999999999932px;top:251.49px">87</span>
<span class="code" style="left:91.10000000000002px;top:251.49px"><span class="c"> * deactivated (see Options-&gt;General tab).</span></span>
<span class="ln" style="left:13.199999999999932px;top:265.42px">88</span>
<span class="code" style="left:91.10000000000002px;top:265.42px"><span class="c"> */</span></span>
<span class="ln" style="left:13.199999999999932px;top:279.35px">89</span>
<span class="code" style="left:91.10000000000002px;top:279.35px">z = (<span class="ty">short</span>)((<span class="ty">unsigned short</span>)vx + (<span class="ty">unsigned short</span>)vy);</span>
<span class="ln" style="left:13.199999999999932px;top:293.28px">90</span>
<span class="code" style="left:91.10000000000002px;top:293.28px"><span class="ty">__ASTREE_assert</span>((<span class="n">-2</span>&lt;=z &amp;&amp; z&lt;=<span class="n">2</span>));</span>
<span class="ln" style="left:13.199999999999932px;top:307.21px">91</span>
<div class="sb" style="left:465.9px;top:0;width:13.6px;height:314px;border-left:1px solid #c6c6c6"></div>
<div class="sbtn" style="left:465.9px;top:0;width:13.6px;height:14.2px"></div><svg class="a" style="left:469.5px;top:5.2px" width="7" height="4" viewBox="0 0 7 4"><polygon points="0,4 7,4 3.5,0" fill="#444"/></svg>
<div class="sbtn" style="left:465.9px;top:299.6px;width:13.6px;height:14.4px"></div><svg class="a" style="left:469.5px;top:305.2px" width="7" height="4" viewBox="0 0 7 4"><polygon points="0,0 7,0 3.5,4" fill="#444"/></svg>
<div style="left:466.9px;top:150.8px;width:12.6px;height:1.6px;background:#f4b47c"></div>
<div style="left:466.9px;top:270.6px;width:12.6px;height:1.6px;background:#f4b47c"></div>
<div style="left:466.9px;top:279.6px;width:12.6px;height:1.6px;background:#f4b47c"></div>
<div style="left:466.9px;top:289.4px;width:12.6px;height:1.6px;background:#f8d4b4"></div>
<div style="left:465.9px;top:155px;width:13.6px;height:44.60000000000002px;background:linear-gradient(90deg,#f4f4f4,#fff 40%,#fff);border:1px solid #c2c2c2"></div>
<div class="sb" style="left:0;top:314px;width:479.5px;height:14px;border-top:1px solid #c6c6c6"></div>
<div class="sbtn" style="left:0;top:314px;width:15.6px;height:14px"></div><svg class="a" style="left:5px;top:318px" width="4.6" height="7" viewBox="0 0 4.6 7"><polygon points="4.6,0 4.6,7 0,3.5" fill="#444"/></svg>
<div style="left:15.6px;top:314px;width:352.4px;height:14px;background:#fdfdfd;border:1px solid #cfcfcf;border-left:none"></div>
<div class="sbtn" style="left:451.9px;top:314px;width:14.2px;height:14px"></div><svg class="a" style="left:456.9px;top:318px" width="4.6" height="7" viewBox="0 0 4.6 7"><polygon points="0,0 0,7 4.6,3.5" fill="#444"/></svg>
<div style="left:465.9px;top:314px;width:13.6px;height:14px;background:#f0f0f0;border:1px solid #cfcfcf"></div>
</div>
<div style="left:787px;top:264px;width:2px;height:2px;background:#fafafa"></div><div style="left:786px;top:263px;width:2px;height:2px;background:#7a7a7a"></div>
<div style="left:787px;top:272px;width:2px;height:2px;background:#fafafa"></div><div style="left:786px;top:271px;width:2px;height:2px;background:#7a7a7a"></div>
<div style="left:787px;top:280px;width:2px;height:2px;background:#fafafa"></div><div style="left:786px;top:279px;width:2px;height:2px;background:#7a7a7a"></div>
<div style="left:787px;top:288px;width:2px;height:2px;background:#fafafa"></div><div style="left:786px;top:287px;width:2px;height:2px;background:#7a7a7a"></div>
<div style="left:787px;top:296px;width:2px;height:2px;background:#fafafa"></div><div style="left:786px;top:295px;width:2px;height:2px;background:#7a7a7a"></div>
<div style="left:787px;top:304px;width:2px;height:2px;background:#fafafa"></div><div style="left:786px;top:303px;width:2px;height:2px;background:#7a7a7a"></div>
<div style="left:787px;top:312px;width:2px;height:2px;background:#fafafa"></div><div style="left:786px;top:311px;width:2px;height:2px;background:#7a7a7a"></div>
<div style="left:715px;top:482px;width:2px;height:2px;background:#fafafa"></div><div style="left:714px;top:481px;width:2px;height:2px;background:#7a7a7a"></div>
<div style="left:723px;top:482px;width:2px;height:2px;background:#fafafa"></div><div style="left:722px;top:481px;width:2px;height:2px;background:#7a7a7a"></div>
<div style="left:731px;top:482px;width:2px;height:2px;background:#fafafa"></div><div style="left:730px;top:481px;width:2px;height:2px;background:#7a7a7a"></div>
<div style="left:739px;top:482px;width:2px;height:2px;background:#fafafa"></div><div style="left:738px;top:481px;width:2px;height:2px;background:#7a7a7a"></div>
<div style="left:747px;top:482px;width:2px;height:2px;background:#fafafa"></div><div style="left:746px;top:481px;width:2px;height:2px;background:#7a7a7a"></div>
<div style="left:755px;top:482px;width:2px;height:2px;background:#fafafa"></div><div style="left:754px;top:481px;width:2px;height:2px;background:#7a7a7a"></div>
<div style="left:763px;top:482px;width:2px;height:2px;background:#fafafa"></div><div style="left:762px;top:481px;width:2px;height:2px;background:#7a7a7a"></div>
<div style="left:771px;top:482px;width:2px;height:2px;background:#fafafa"></div><div style="left:770px;top:481px;width:2px;height:2px;background:#7a7a7a"></div>
<div style="left:779px;top:482px;width:2px;height:2px;background:#fafafa"></div><div style="left:778px;top:481px;width:2px;height:2px;background:#7a7a7a"></div>
<div style="left:787px;top:482px;width:2px;height:2px;background:#fafafa"></div><div style="left:786px;top:481px;width:2px;height:2px;background:#7a7a7a"></div>
<div style="left:795px;top:482px;width:2px;height:2px;background:#fafafa"></div><div style="left:794px;top:481px;width:2px;height:2px;background:#7a7a7a"></div>
<div style="left:803px;top:482px;width:2px;height:2px;background:#fafafa"></div><div style="left:802px;top:481px;width:2px;height:2px;background:#7a7a7a"></div>
<div style="left:811px;top:482px;width:2px;height:2px;background:#fafafa"></div><div style="left:810px;top:481px;width:2px;height:2px;background:#7a7a7a"></div>
<div style="left:819px;top:482px;width:2px;height:2px;background:#fafafa"></div><div style="left:818px;top:481px;width:2px;height:2px;background:#7a7a7a"></div>
<div style="left:827px;top:482px;width:2px;height:2px;background:#fafafa"></div><div style="left:826px;top:481px;width:2px;height:2px;background:#7a7a7a"></div>
<div style="left:835px;top:482px;width:2px;height:2px;background:#fafafa"></div><div style="left:834px;top:481px;width:2px;height:2px;background:#7a7a7a"></div>
<div style="left:843px;top:482px;width:2px;height:2px;background:#fafafa"></div><div style="left:842px;top:481px;width:2px;height:2px;background:#7a7a7a"></div>
<div style="left:851px;top:482px;width:2px;height:2px;background:#fafafa"></div><div style="left:850px;top:481px;width:2px;height:2px;background:#7a7a7a"></div>
<div style="left:859px;top:482px;width:2px;height:2px;background:#fafafa"></div><div style="left:858px;top:481px;width:2px;height:2px;background:#7a7a7a"></div>
<span class="u" style="left:302.80px;top:463.80px;color:#2a2a2a;letter-spacing:-0.014px;">Line 78, column 9</span>
<span class="u" style="left:791.30px;top:463.80px;color:#2a2a2a;letter-spacing:-0.014px;">Line 81, column 1</span>
<div style="left:303px;top:485px;width:969.5px;height:191px;background:#fff;border:1px solid #b4b4b4;overflow:hidden">
<span class="out" style="left:4.1px;top:0.17px;color:#a0504a">[ call#main at astree.cfg:18.5-9</span>
<span class="out" style="left:4.1px;top:16.08px;color:#a0504a">  call#basic_examples at astree.cfg:26.6-22</span>
<span class="out" style="left:4.1px;top:31.99px;color:#a0504a">  loop=11/100 at scenarios.c:77.6-78.17</span>
<span class="out" style="left:4.1px;top:47.90px;color:#a0504a">  ALARM (A) overflow_upon_dereference: dereferencing 1 byte(s) at offset(s) 10 may overflow the variable ArrayBlock of byte-size 10 at scenarios.c:78.8-14</span>
<span class="out" style="left:4.1px;top:63.81px;color:#3c3c3c">&gt; *ptr++=i;</span>
<span class="out" style="left:4.1px;top:79.72px;color:#3c3c3c">&gt; ~~~~~~</span>
<span class="out" style="left:4.1px;top:111.54px;color:#d64836">[ call#main at astree.cfg:18.5-9</span>
<span class="out" style="left:4.1px;top:127.45px;color:#d64836">  call#basic_examples at astree.cfg:26.6-22</span>
<span class="out" style="left:4.1px;top:143.36px;color:#d64836">  loop=11/100 at scenarios.c:77.6-78.17</span>
<span class="out" style="left:4.1px;top:159.27px;color:#d64836">  ERROR analysis_stopped: Definite runtime error during assignment in this context. Analysis stopped for this context at scenarios.c:78.8-14</span>
<div class="sb" style="left:0;top:176px;width:968px;height:13.2px;border-top:1px solid #c6c6c6"></div>
<div class="sbtn" style="left:0;top:176px;width:15.6px;height:13.2px"></div><svg class="a" style="left:5px;top:179.4px" width="4.6" height="7" viewBox="0 0 4.6 7"><polygon points="4.6,0 4.6,7 0,3.5" fill="#444"/></svg>
<div style="left:15.6px;top:176px;width:828.4px;height:13.2px;background:#fdfdfd;border:1px solid #cfcfcf;border-left:none"></div>
<div class="sbtn" style="left:954.2px;top:176px;width:13.6px;height:13.2px"></div><svg class="a" style="left:959px;top:179.4px" width="4.6" height="7" viewBox="0 0 4.6 7"><polygon points="0,0 0,7 4.6,3.5" fill="#444"/></svg>
</div>
<div style="left:299px;top:454px;width:2px;height:2px;background:#fafafa"></div><div style="left:298px;top:453px;width:2px;height:2px;background:#7a7a7a"></div>
<div style="left:299px;top:462px;width:2px;height:2px;background:#fafafa"></div><div style="left:298px;top:461px;width:2px;height:2px;background:#7a7a7a"></div>
<div style="left:299px;top:471px;width:2px;height:2px;background:#fafafa"></div><div style="left:298px;top:470px;width:2px;height:2px;background:#7a7a7a"></div>
<div style="left:299px;top:479px;width:2px;height:2px;background:#fafafa"></div><div style="left:298px;top:478px;width:2px;height:2px;background:#7a7a7a"></div>
<div style="left:299px;top:487px;width:2px;height:2px;background:#fafafa"></div><div style="left:298px;top:486px;width:2px;height:2px;background:#7a7a7a"></div>
<div style="left:299px;top:495px;width:2px;height:2px;background:#fafafa"></div><div style="left:298px;top:494px;width:2px;height:2px;background:#7a7a7a"></div>
<div style="left:299px;top:503px;width:2px;height:2px;background:#fafafa"></div><div style="left:298px;top:502px;width:2px;height:2px;background:#7a7a7a"></div>
<div style="left:299px;top:511px;width:2px;height:2px;background:#fafafa"></div><div style="left:298px;top:510px;width:2px;height:2px;background:#7a7a7a"></div>
<div style="left:299px;top:519px;width:2px;height:2px;background:#fafafa"></div><div style="left:298px;top:518px;width:2px;height:2px;background:#7a7a7a"></div>
<div style="left:299px;top:527px;width:2px;height:2px;background:#fafafa"></div><div style="left:298px;top:526px;width:2px;height:2px;background:#7a7a7a"></div>
<div style="left:299px;top:535px;width:2px;height:2px;background:#fafafa"></div><div style="left:298px;top:534px;width:2px;height:2px;background:#7a7a7a"></div>
<div style="left:299px;top:543px;width:2px;height:2px;background:#fafafa"></div><div style="left:298px;top:542px;width:2px;height:2px;background:#7a7a7a"></div>
<div style="left:299px;top:551px;width:2px;height:2px;background:#fafafa"></div><div style="left:298px;top:550px;width:2px;height:2px;background:#7a7a7a"></div>
<div style="left:299px;top:559px;width:2px;height:2px;background:#fafafa"></div><div style="left:298px;top:558px;width:2px;height:2px;background:#7a7a7a"></div>
<div style="left:299px;top:567px;width:2px;height:2px;background:#fafafa"></div><div style="left:298px;top:566px;width:2px;height:2px;background:#7a7a7a"></div>
<div style="left:299px;top:575px;width:2px;height:2px;background:#fafafa"></div><div style="left:298px;top:574px;width:2px;height:2px;background:#7a7a7a"></div>
<div style="left:299px;top:583px;width:2px;height:2px;background:#fafafa"></div><div style="left:298px;top:582px;width:2px;height:2px;background:#7a7a7a"></div>
<div style="left:299px;top:591px;width:2px;height:2px;background:#fafafa"></div><div style="left:298px;top:590px;width:2px;height:2px;background:#7a7a7a"></div>
<div style="left:715px;top:680px;width:2px;height:2px;background:#fafafa"></div><div style="left:714px;top:679px;width:2px;height:2px;background:#7a7a7a"></div>
<div style="left:723px;top:680px;width:2px;height:2px;background:#fafafa"></div><div style="left:722px;top:679px;width:2px;height:2px;background:#7a7a7a"></div>
<div style="left:731px;top:680px;width:2px;height:2px;background:#fafafa"></div><div style="left:730px;top:679px;width:2px;height:2px;background:#7a7a7a"></div>
<div style="left:739px;top:680px;width:2px;height:2px;background:#fafafa"></div><div style="left:738px;top:679px;width:2px;height:2px;background:#7a7a7a"></div>
<div style="left:747px;top:680px;width:2px;height:2px;background:#fafafa"></div><div style="left:746px;top:679px;width:2px;height:2px;background:#7a7a7a"></div>
<div style="left:755px;top:680px;width:2px;height:2px;background:#fafafa"></div><div style="left:754px;top:679px;width:2px;height:2px;background:#7a7a7a"></div>
<div style="left:763px;top:680px;width:2px;height:2px;background:#fafafa"></div><div style="left:762px;top:679px;width:2px;height:2px;background:#7a7a7a"></div>
<div style="left:771px;top:680px;width:2px;height:2px;background:#fafafa"></div><div style="left:770px;top:679px;width:2px;height:2px;background:#7a7a7a"></div>
<div style="left:779px;top:680px;width:2px;height:2px;background:#fafafa"></div><div style="left:778px;top:679px;width:2px;height:2px;background:#7a7a7a"></div>
<div style="left:787px;top:680px;width:2px;height:2px;background:#fafafa"></div><div style="left:786px;top:679px;width:2px;height:2px;background:#7a7a7a"></div>
<div style="left:795px;top:680px;width:2px;height:2px;background:#fafafa"></div><div style="left:794px;top:679px;width:2px;height:2px;background:#7a7a7a"></div>
<div style="left:803px;top:680px;width:2px;height:2px;background:#fafafa"></div><div style="left:802px;top:679px;width:2px;height:2px;background:#7a7a7a"></div>
<div style="left:811px;top:680px;width:2px;height:2px;background:#fafafa"></div><div style="left:810px;top:679px;width:2px;height:2px;background:#7a7a7a"></div>
<div style="left:819px;top:680px;width:2px;height:2px;background:#fafafa"></div><div style="left:818px;top:679px;width:2px;height:2px;background:#7a7a7a"></div>
<div style="left:827px;top:680px;width:2px;height:2px;background:#fafafa"></div><div style="left:826px;top:679px;width:2px;height:2px;background:#7a7a7a"></div>
<div style="left:835px;top:680px;width:2px;height:2px;background:#fafafa"></div><div style="left:834px;top:679px;width:2px;height:2px;background:#7a7a7a"></div>
<div style="left:843px;top:680px;width:2px;height:2px;background:#fafafa"></div><div style="left:842px;top:679px;width:2px;height:2px;background:#7a7a7a"></div>
<div style="left:851px;top:680px;width:2px;height:2px;background:#fafafa"></div><div style="left:850px;top:679px;width:2px;height:2px;background:#7a7a7a"></div>
<div style="left:859px;top:680px;width:2px;height:2px;background:#fafafa"></div><div style="left:858px;top:679px;width:2px;height:2px;background:#7a7a7a"></div>
<div style="left:303px;top:683px;width:962.8px;height:242.5px;background:#fff;border:1px solid #b4b4b4;overflow:hidden">
<div style="left:0;top:0;width:947.4000000000001px;height:20px;background:linear-gradient(#fdfdfd,#f1f1f1);border-bottom:1px solid #c9c9c9"></div>
<div style="left:0;top:49px;width:947.4000000000001px;height:1px;background:#d6d6d6"></div>
<span class="u" style="left:2.70px;top:27.57px;color:#2a2a2a;letter-spacing:-0.006px;">5</span>
<svg class="a" style="left:57.60000000000002px;top:28.070000000000046px" width="13" height="13" viewBox="0 0 13 13"><path d="M1.1 0.6V12.4" stroke="#3c5468" stroke-width="1.5"/><path d="M1.8 0.7C4.4 0.1 6 1.4 7.6 2.6C9.2 3.7 10.6 4.4 12.1 5C10.6 5.8 9.4 7 7.6 7C5.6 7 4 6.4 1.8 7.2Z" fill="#2b87c4"/></svg>
<span class="u" style="left:78.30px;top:27.57px;color:#2a2a2a;letter-spacing:0.026px;">Alarm (R)</span>
<span class="u" style="left:179.10px;top:27.57px;color:#2a2a2a;letter-spacing:0.162px;">Incompatible object pointer conversion</span>
<svg class="a" style="left:451.4px;top:28.870000000000054px" width="11.8" height="11.8" viewBox="0 0 12 12" fill="none" stroke="#333" stroke-width="1.2"><path d="M3.9 0.6V11.4M8.1 0.6V11.4M0.4 3.9H11.6M0.4 8.1H11.6"/></svg>
<span class="u" style="left:470.90px;top:27.57px;color:#2a2a2a;letter-spacing:-0.209px;">Proc1.c:91.25-37</span>
<div style="left:758px;top:20.75px;width:189.4000000000001px;height:27.78px;overflow:hidden">
<span class="u" style="left:2.70px;top:6.82px;color:#2a2a2a;letter-spacing:-0.013px;">check failed (violates A.1.11)</span>
</div>
<div style="left:0;top:79px;width:947.4000000000001px;height:1px;background:#d6d6d6"></div>
<span class="u" style="left:2.70px;top:57.35px;color:#2a2a2a;letter-spacing:-0.006px;">6</span>
<svg class="a" style="left:57.60000000000002px;top:57.85000000000002px" width="13" height="13" viewBox="0 0 13 13"><path d="M1.1 0.6V12.4" stroke="#6a2c34" stroke-width="1.5"/><path d="M1.8 0.7C4.4 0.1 6 1.4 7.6 2.6C9.2 3.7 10.6 4.4 12.1 5C10.6 5.8 9.4 7 7.6 7C5.6 7 4 6.4 1.8 7.2Z" fill="#d4384a"/></svg>
<span class="u" style="left:78.30px;top:57.35px;color:#2a2a2a;letter-spacing:0.188px;">Alarm (A)</span>
<span class="u" style="left:179.10px;top:57.35px;color:#2a2a2a;letter-spacing:0.112px;">Overflow in conversion (with unpredictable result)</span>
<svg class="a" style="left:451.4px;top:58.65000000000003px" width="11.8" height="11.8" viewBox="0 0 12 12" fill="none" stroke="#333" stroke-width="1.2"><path d="M3.9 0.6V11.4M8.1 0.6V11.4M0.4 3.9H11.6M0.4 8.1H11.6"/></svg>
<span class="u" style="left:470.90px;top:57.35px;color:#2a2a2a;letter-spacing:-0.182px;">scenarios.c:64.4-20</span>
<div style="left:758px;top:50.53px;width:189.4000000000001px;height:27.78px;overflow:hidden">
<span class="u" style="left:2.70px;top:6.82px;color:#2a2a2a;letter-spacing:0.054px;">[0, 40000] not included in double-&gt;single</span>
</div>
<div style="left:0;top:109px;width:947.4000000000001px;height:1px;background:#d6d6d6"></div>
<span class="u" style="left:2.70px;top:87.13px;color:#2a2a2a;letter-spacing:-0.006px;">7</span>
<svg class="a" style="left:57.60000000000002px;top:87.63px" width="13" height="13" viewBox="0 0 13 13"><path d="M1.1 0.6V12.4" stroke="#6a2c34" stroke-width="1.5"/><path d="M1.8 0.7C4.4 0.1 6 1.4 7.6 2.6C9.2 3.7 10.6 4.4 12.1 5C10.6 5.8 9.4 7 7.6 7C5.6 7 4 6.4 1.8 7.2Z" fill="#d4384a"/></svg>
<span class="u" style="left:78.30px;top:87.13px;color:#2a2a2a;letter-spacing:0.188px;">Alarm (A)</span>
<span class="u" style="left:179.10px;top:87.13px;color:#2a2a2a;letter-spacing:-0.014px;">Use of uninitialized variables</span>
<svg class="a" style="left:451.4px;top:88.42999999999999px" width="11.8" height="11.8" viewBox="0 0 12 12" fill="none" stroke="#333" stroke-width="1.2"><path d="M3.9 0.6V11.4M8.1 0.6V11.4M0.4 3.9H11.6M0.4 8.1H11.6"/></svg>
<span class="u" style="left:470.90px;top:87.13px;color:#2a2a2a;letter-spacing:-0.192px;">scenarios.c:71.8-23</span>
<div style="left:758px;top:80.31px;width:189.4000000000001px;height:27.78px;overflow:hidden">
<span class="u" style="left:2.70px;top:6.82px;color:#2a2a2a;letter-spacing:-0.005px;">reading 4 byte(s) at offset(s) 0 in variable</span>
</div>
<div style="left:0;top:139px;width:947.4000000000001px;height:1px;background:#d6d6d6"></div>
<span class="u" style="left:2.70px;top:116.91px;color:#2a2a2a;letter-spacing:-0.006px;">8</span>
<svg class="a" style="left:57.60000000000002px;top:117.41000000000008px" width="13" height="13" viewBox="0 0 13 13"><path d="M1.1 0.6V12.4" stroke="#6a2c34" stroke-width="1.5"/><path d="M1.8 0.7C4.4 0.1 6 1.4 7.6 2.6C9.2 3.7 10.6 4.4 12.1 5C10.6 5.8 9.4 7 7.6 7C5.6 7 4 6.4 1.8 7.2Z" fill="#d4384a"/></svg>
<span class="u" style="left:78.30px;top:116.91px;color:#2a2a2a;letter-spacing:0.148px;">Definite Alarm (A)</span>
<span class="u" style="left:179.10px;top:116.91px;color:#2a2a2a;letter-spacing:0.097px;">Out-of-bound array access</span>
<svg class="a" style="left:451.4px;top:118.21000000000008px" width="11.8" height="11.8" viewBox="0 0 12 12" fill="none" stroke="#333" stroke-width="1.2"><path d="M3.9 0.6V11.4M8.1 0.6V11.4M0.4 3.9H11.6M0.4 8.1H11.6"/></svg>
<span class="u" style="left:470.90px;top:116.91px;color:#2a2a2a;letter-spacing:-0.191px;">scenarios.c:73.19-20</span>
<div style="left:758px;top:110.09px;width:189.4000000000001px;height:27.78px;overflow:hidden">
<span class="u" style="left:2.70px;top:6.82px;color:#2a2a2a;letter-spacing:-0.005px;">{10} not included in array index range</span>
</div>
<div style="left:0;top:168px;width:947.4000000000001px;height:1px;background:#d6d6d6"></div>
<span class="u" style="left:2.70px;top:146.69px;color:#2a2a2a;letter-spacing:-0.006px;">9</span>
<svg class="a" style="left:57.60000000000002px;top:147.19000000000005px" width="13" height="13" viewBox="0 0 13 13"><path d="M1.1 0.6V12.4" stroke="#6a2c34" stroke-width="1.5"/><path d="M1.8 0.7C4.4 0.1 6 1.4 7.6 2.6C9.2 3.7 10.6 4.4 12.1 5C10.6 5.8 9.4 7 7.6 7C5.6 7 4 6.4 1.8 7.2Z" fill="#d4384a"/></svg>
<span class="u" style="left:78.30px;top:146.69px;color:#2a2a2a;letter-spacing:0.188px;">Alarm (A)</span>
<span class="u" style="left:179.10px;top:146.69px;color:#2a2a2a;letter-spacing:-0.014px;">Use of uninitialized variables</span>
<svg class="a" style="left:451.4px;top:147.99000000000004px" width="11.8" height="11.8" viewBox="0 0 12 12" fill="none" stroke="#333" stroke-width="1.2"><path d="M3.9 0.6V11.4M8.1 0.6V11.4M0.4 3.9H11.6M0.4 8.1H11.6"/></svg>
<span class="u" style="left:470.90px;top:146.69px;color:#2a2a2a;letter-spacing:-0.192px;">scenarios.c:76.8-23</span>
<div style="left:758px;top:139.87px;width:189.4000000000001px;height:27.78px;overflow:hidden">
<span class="u" style="left:2.70px;top:6.82px;color:#2a2a2a;letter-spacing:-0.005px;">reading 4 byte(s) at offset(s) 0 in variable</span>
</div>
<div style="left:0;top:169px;width:947.4000000000001px;height:29px;background:#2a72b9"></div>
<span class="u" style="left:2.70px;top:176.47px;color:#fff;letter-spacing:-0.006px;">10</span>
<svg class="a" style="left:57.60000000000002px;top:176.97000000000003px" width="13" height="13" viewBox="0 0 13 13"><path d="M1.1 0.6V12.4" stroke="#6a2c34" stroke-width="1.5"/><path d="M1.8 0.7C4.4 0.1 6 1.4 7.6 2.6C9.2 3.7 10.6 4.4 12.1 5C10.6 5.8 9.4 7 7.6 7C5.6 7 4 6.4 1.8 7.2Z" fill="#d4384a"/></svg>
<span class="u" style="left:78.30px;top:176.47px;color:#fff;letter-spacing:0.148px;">Definite Alarm (A)</span>
<span class="u" style="left:179.10px;top:176.47px;color:#fff;letter-spacing:0.010px;">Possible overflow upon dereference</span>
<svg class="a" style="left:451.4px;top:177.77px" width="11.8" height="11.8" viewBox="0 0 12 12" fill="none" stroke="#fff" stroke-width="1.2"><path d="M3.9 0.6V11.4M8.1 0.6V11.4M0.4 3.9H11.6M0.4 8.1H11.6"/></svg>
<span class="u" style="left:470.90px;top:176.47px;color:#fff;letter-spacing:-0.192px;">scenarios.c:78.8-14</span>
<div style="left:758px;top:169.65px;width:189.4000000000001px;height:27.78px;overflow:hidden">
<span class="u" style="left:2.70px;top:6.82px;color:#fff;letter-spacing:-0.005px;">dereferencing 1 byte(s) at offset(s) 10 may</span>
</div>
<div style="left:0;top:228px;width:947.4000000000001px;height:1px;background:#d6d6d6"></div>
<span class="u" style="left:2.70px;top:206.25px;color:#2a2a2a;letter-spacing:-0.006px;">11</span>
<svg class="a" style="left:57.60000000000002px;top:206.7500000000001px" width="13" height="13" viewBox="0 0 13 13"><path d="M1.1 0.6V12.4" stroke="#6a2c34" stroke-width="1.5"/><path d="M1.8 0.7C4.4 0.1 6 1.4 7.6 2.6C9.2 3.7 10.6 4.4 12.1 5C10.6 5.8 9.4 7 7.6 7C5.6 7 4 6.4 1.8 7.2Z" fill="#d4384a"/></svg>
<span class="u" style="left:78.30px;top:206.25px;color:#2a2a2a;letter-spacing:0.188px;">Alarm (A)</span>
<span class="u" style="left:179.10px;top:206.25px;color:#2a2a2a;letter-spacing:0.053px;">Assertion failure</span>
<svg class="a" style="left:451.4px;top:207.5500000000001px" width="11.8" height="11.8" viewBox="0 0 12 12" fill="none" stroke="#333" stroke-width="1.2"><path d="M3.9 0.6V11.4M8.1 0.6V11.4M0.4 3.9H11.6M0.4 8.1H11.6"/></svg>
<span class="u" style="left:470.90px;top:206.25px;color:#2a2a2a;letter-spacing:-0.191px;">scenarios.c:121.4-40</span>
<div style="left:758px;top:199.43px;width:189.4000000000001px;height:27.78px;overflow:hidden">
<span class="u" style="left:2.70px;top:6.82px;color:#2a2a2a;letter-spacing:-0.029px;">assertion failed</span>
</div>
<div style="left:52.5px;top:0;width:1px;height:228.21000000000004px;background:#d4d4d4"></div>
<div style="left:175.5px;top:0;width:1px;height:228.21000000000004px;background:#d4d4d4"></div>
<div style="left:445.5px;top:0;width:1px;height:228.21000000000004px;background:#d4d4d4"></div>
<div style="left:583.0px;top:0;width:1px;height:228.21000000000004px;background:#d4d4d4"></div>
<div style="left:673.0px;top:0;width:1px;height:228.21000000000004px;background:#d4d4d4"></div>
<div style="left:756.5px;top:0;width:1px;height:228.21000000000004px;background:#d4d4d4"></div>
<span class="b" style="left:2.50px;top:2.90px;color:#2a2a2a;letter-spacing:0.344px;">Order</span>
<svg class="a" style="left:41.39999999999998px;top:7.2000000000000455px" width="7" height="4" viewBox="0 0 7 4"><polygon points="0,0 7,0 3.5,4" fill="#444"/></svg>
<span class="b" style="left:101.50px;top:2.90px;color:#2a2a2a;letter-spacing:0.074px;">Type</span>
<span class="b" style="left:285.50px;top:2.90px;color:#2a2a2a;letter-spacing:0.129px;">Category</span>
<span class="b" style="left:490.90px;top:2.90px;color:#2a2a2a;letter-spacing:-0.077px;">Location</span>
<span class="b" style="left:593.50px;top:2.90px;color:#2a2a2a;letter-spacing:-0.292px;">Classification</span>
<span class="b" style="left:687.90px;top:2.90px;color:#2a2a2a;letter-spacing:0.319px;">Comment</span>
<div class="sb" style="left:947.4000000000001px;top:0;width:14px;height:227px;border-left:1px solid #c6c6c6"></div>
<div class="sbtn" style="left:947.4000000000001px;top:0;width:14px;height:15px"></div><svg class="a" style="left:951.0000000000001px;top:6.3px" width="7" height="4" viewBox="0 0 7 4"><polygon points="0,4 7,4 3.5,0" fill="#444"/></svg>
<div style="left:947.4000000000001px;top:53px;width:14px;height:60.5px;background:#fdfdfd;border:1px solid #c9c9c9"></div>
<div class="sbtn" style="left:947.4000000000001px;top:214px;width:14px;height:14px"></div><svg class="a" style="left:951.0000000000001px;top:219.20000000000005px" width="7" height="4" viewBox="0 0 7 4"><polygon points="0,0 7,0 3.5,4" fill="#444"/></svg>
<div class="sb" style="left:0;top:228px;width:947.4000000000001px;height:13px;border-top:1px solid #c6c6c6"></div>
<div class="sbtn" style="left:0;top:228px;width:15.6px;height:13.6px"></div><svg class="a" style="left:5px;top:231.4px" width="4.6" height="7" viewBox="0 0 4.6 7"><polygon points="4.6,0 4.6,7 0,3.5" fill="#444"/></svg>
<div style="left:15.6px;top:228px;width:681.9px;height:13.6px;background:#fdfdfd;border:1px solid #cfcfcf;border-left:none"></div>
<div class="sbtn" style="left:936.4000000000001px;top:228px;width:11.0px;height:13.6px"></div><svg class="a" style="left:940px;top:231.4px" width="4.6" height="7" viewBox="0 0 4.6 7"><polygon points="0,0 0,7 4.6,3.5" fill="#444"/></svg>
<div style="left:947.4000000000001px;top:228px;width:14px;height:13.6px;background:#f0f0f0;border:1px solid #cfcfcf"></div>
</div>
<div style="left:1270px;top:792px;width:2px;height:2px;background:#fafafa"></div><div style="left:1269px;top:791px;width:2px;height:2px;background:#7a7a7a"></div>
<div style="left:1270px;top:800px;width:2px;height:2px;background:#fafafa"></div><div style="left:1269px;top:799px;width:2px;height:2px;background:#7a7a7a"></div>
<div style="left:1270px;top:808px;width:2px;height:2px;background:#fafafa"></div><div style="left:1269px;top:807px;width:2px;height:2px;background:#7a7a7a"></div>
<div style="left:1270px;top:816px;width:2px;height:2px;background:#fafafa"></div><div style="left:1269px;top:815px;width:2px;height:2px;background:#7a7a7a"></div>
<div style="left:303px;top:932.4px;width:248.4px;height:23.4px;background:#fff;border:1px solid #b5b5b5;border-radius:2.5px"></div>
<div style="left:530.2px;top:933.4px;width:1px;height:21.4px;background:#cfcfcf"></div>
<div style="left:531.2px;top:933.4px;width:19.2px;height:21.4px;background:#f4f4f4;border-radius:0 2px 2px 0"></div>
<svg class="a" style="left:536.6px;top:942px" width="8" height="4.6" viewBox="0 0 8 4.6"><polygon points="0,0 8,0 4.0,4.6" fill="#444"/></svg>
<svg class="a" style="left:309.5px;top:937px" width="14" height="14" viewBox="0 0 14 14" fill="none" stroke="#333" stroke-width="1.1"><path d="M1.2 3.8H12.6"/><circle cx="8.6" cy="3.8" r="1.7" fill="#333"/><path d="M5 10.2H12.6"/><circle cx="3" cy="10.2" r="1.6"/></svg>
<span class="u" style="left:328.00px;top:936.90px;color:#7c7c7c;letter-spacing:-0.112px;">Filter...</span>
<div style="left:557.2px;top:932.4px;width:80px;height:23.4px;background:linear-gradient(#fdfdfd,#f3f3f3);border:1px solid #bcbcbc;border-radius:3px"></div>
<span class="u" style="left:566.70px;top:937.00px;color:#2a2a2a;letter-spacing:0.213px;">More filters</span>
<span class="u" style="left:642.10px;top:937.00px;color:#2a2a2a;letter-spacing:0.066px;">20 of 20 findings visible</span>
<svg class="a" style="left:988px;top:939.6px" width="12.4" height="8" viewBox="0 0 12.4 8" fill="none" stroke="#333" stroke-width="1.15"><path d="M0.6 1.2L6.2 6.6L11.8 1.2"/></svg>
<span class="u" style="left:1003.90px;top:936.60px;color:#2a2a2a;letter-spacing:0.143px;">Unused comments</span>
<svg class="a" style="left:1126px;top:939.6px" width="12.4" height="8" viewBox="0 0 12.4 8" fill="none" stroke="#333" stroke-width="1.15"><path d="M0.6 1.2L6.2 6.6L11.8 1.2"/></svg>
<span class="u" style="left:1142.50px;top:936.60px;color:#2a2a2a;letter-spacing:0.133px;">Comment suggestions</span>
<div style="left:379.2px;top:962.4px;width:77.4px;height:22.2px;background:#c6c6c6;border-radius:5px"></div>
<svg class="a" style="left:308.4px;top:968.6px" width="12.4" height="8" viewBox="0 0 12.4 8" fill="none" stroke="#333" stroke-width="1.15"><path d="M0.6 6.6L6.2 1.2L11.8 6.6"/></svg>
<span class="u" style="left:325.50px;top:965.60px;color:#2a2a2a;letter-spacing:0.496px;">Output</span>
<svg class="a" style="left:385.4px;top:969.4px" width="12.4" height="8" viewBox="0 0 12.4 8" fill="none" stroke="#2a68ae" stroke-width="1.15"><path d="M0.6 1.2L6.2 6.6L11.8 1.2"/></svg>
<span class="u" style="left:401.70px;top:965.60px;color:#2a2a2a;letter-spacing:0.163px;">Findings</span>
<svg class="a" style="left:468.6px;top:968.6px" width="12.4" height="8" viewBox="0 0 12.4 8" fill="none" stroke="#333" stroke-width="1.15"><path d="M0.6 6.6L6.2 1.2L11.8 6.6"/></svg>
<span class="u" style="left:485.50px;top:965.60px;color:#2a2a2a;letter-spacing:0.100px;">Locations</span>
<svg class="a" style="left:557.4px;top:968.6px" width="12.4" height="8" viewBox="0 0 12.4 8" fill="none" stroke="#333" stroke-width="1.15"><path d="M0.6 6.6L6.2 1.2L11.8 6.6"/></svg>
<span class="u" style="left:574.90px;top:965.60px;color:#2a2a2a;letter-spacing:-0.315px;">Search</span>
<svg class="a" style="left:631.4px;top:968.6px" width="12.4" height="8" viewBox="0 0 12.4 8" fill="none" stroke="#333" stroke-width="1.15"><path d="M0.6 6.6L6.2 1.2L11.8 6.6"/></svg>
<span class="u" style="left:648.50px;top:965.60px;color:#2a2a2a;letter-spacing:0.290px;">Project monitor</span>
<div style="left:1185.8px;top:968.0999999999999px;width:12.4px;height:12.4px;background:#e84c4e;border-radius:50%"></div>
<div style="left:1207.8px;top:968.0999999999999px;width:12.4px;height:12.4px;background:#70642a;border-radius:50%"></div>
<div style="left:1229.8px;top:968.0999999999999px;width:12.4px;height:12.4px;background:#1d7a45;border-radius:50%"></div>
<svg class="a" style="left:1253.5px;top:966.5px" width="14" height="14" viewBox="0 0 14 14" fill="none" stroke="#3a3a3a" stroke-width="1.1"><rect x="4.4" y="1.3" width="8.4" height="8.2"/><rect x="1.9" y="1.3" width="2.6" height="8.6" fill="#d8d8d8" stroke="#4a4a4a" stroke-width="0.9"/><path d="M2.4 3H4" stroke-width="0.7"/><path d="M8.4 9.6V11.6M4.8 12.1H11.4" stroke-width="1.2"/></svg>
</body></html>
